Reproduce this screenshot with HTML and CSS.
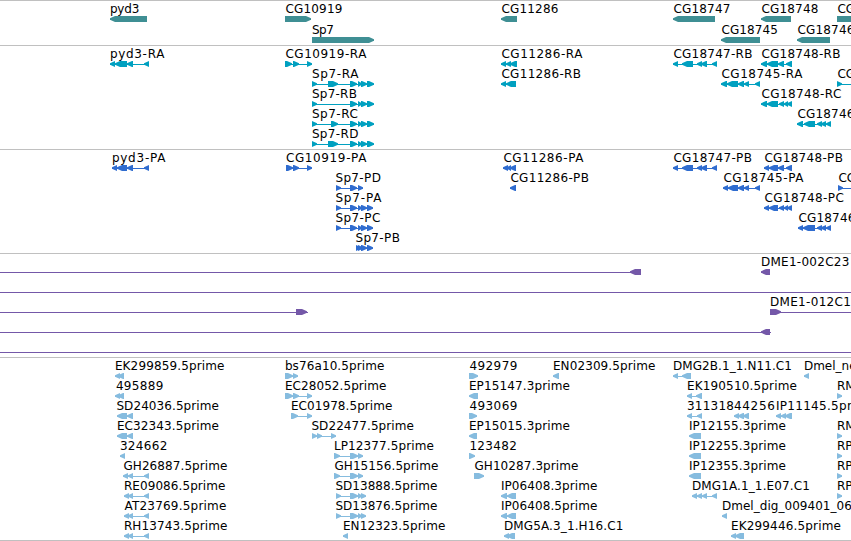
FILE: index.html
```html
<!DOCTYPE html>
<html lang="en">
  <head>
    <meta charset="UTF-8" />
    <title>Genome tracks</title>
    <link rel="stylesheet" href="styles.css">
  </head>
  <body>
    <main>
      <section class="track gene" id="gene"></section>
      <section class="track transcript" id="transcript"></section>
      <section class="track protein" id="protein"></section>
      <section class="track clone" id="clone"></section>
      <section class="track est" id="est"></section>
    </main>

    <script src="tracks.js"></script>
  </body>
</html>
```

FILE: styles.css
```css
html,
body {
  width: 100%;
  margin: 0;
  padding: 0;
  overflow: hidden;
}

body {
  font-family: 'DejaVu Sans', sans-serif;
  font-size: 12px;
  background: #fff;
}

.track {
  border-top: 1px solid #c0c0c0;
  padding-bottom: 3px;
}

.gene {
  color: #3f8f94;
  padding-bottom: 2px;
}

.transcript {
  color: #00a0c0;
}

.protein {
  color: #2f6ccf;
}

.clone {
  color: #7458a8;
}

.est {
  color: #86bcdf;
  padding-bottom: 2px;
  border-bottom: 1px solid #c0c0c0;
}

.row {
  display: block;
  width: 100%;
  height: 20px;
  overflow: visible;
}

.gene .row {
  height: 21px;
}

.row text {
  fill: #000;
}

.row line {
  stroke: currentColor;
  stroke-width: 1px;
  shape-rendering: crispEdges;
}

.row polygon {
  fill: currentColor;
}
```

FILE: tracks.js
```javascript
// feature : [label, label x, label width (0 = natural), strand, exons, line start, line end]
const tracks = {
  gene: [
    [
      ['pyd3', 109.5, 29.5, '-', [[110, 147]]],
      ['CG10919', 285, 57, '+', [[285, 311]]],
      ['CG11286', 501, 57, '-', [[501, 517]]],
      ['CG18747', 673, 57, '-', [[673, 715]]],
      ['CG18748', 761, 57, '-', [[761, 791]]],
      ['CG', 837, 0, '+', [[837, 870]]],
    ],
    [
      ['Sp7', 311.5, 22, '+', [[312, 374]]],
      ['CG18745', 721, 56.5, '-', [[721, 760]]],
      ['CG18746', 797, 57, '-', [[797, 830]]],
    ],
  ],
  transcript: [
    [
      ['pyd3-RA', 109.5, 54.5, '-', [[110, 115], [115, 127], [127, 133], [144, 149]]],
      ['CG10919-RA', 285, 81, '+', [[285, 292], [293, 299], [307, 312]]],
      ['CG11286-RA', 501, 81, '-', [[501, 506], [506, 511], [510, 517]]],
      ['CG18747-RB', 673, 79, '-', [[673, 678], [682, 693], [697, 702], [701, 707], [712, 717]]],
      ['CG18748-RB', 761, 79, '-', [[761, 767], [767, 778], [778, 784], [786, 792]]],
    ],
    [
      ['Sp7-RA', 311.5, 46.5, '+', [[312, 317], [328, 338], [350, 357], [358, 362], [361, 367], [367, 374]]],
      ['CG11286-RB', 501, 79.5, '-', [[501, 506], [506, 516]]],
      ['CG18745-RA', 721, 81, '-', [[721, 727], [727, 738], [738, 744], [744, 749], [755, 760]]],
      ['CG', 837, 0, '+', [[837, 842]], 837, 870],
    ],
    [
      ['Sp7-RB', 311.5, 45, '+', [[312, 317], [350, 357], [358, 362], [361, 367], [367, 374]]],
      ['CG18748-RC', 761, 80, '-', [[761, 767], [767, 778], [779, 784], [784, 788], [787, 792]]],
    ],
    [
      ['Sp7-RC', 311.5, 46, '+', [[312, 317], [331, 338], [350, 357], [358, 362], [361, 367], [367, 374]]],
      ['CG18746', 797, 57, '-', [[797, 803], [804, 815], [817, 822], [821, 826], [826, 831]]],
    ],
    [
      ['Sp7-RD', 311.5, 46.5, '+', [[312, 317], [328, 338], [350, 357], [358, 362], [361, 367], [367, 374]]],
    ],
  ],
  protein: [
    [
      ['pyd3-PA', 111.5, 53.5, '-', [[112, 117], [117, 127], [127, 133], [144, 149]]],
      ['CG10919-PA', 285.5, 80.5, '+', [[286, 293], [293, 299], [307, 312]]],
      ['CG11286-PA', 503, 80, '-', [[503, 508], [507, 511], [510, 516]]],
      ['CG18747-PB', 673, 78.5, '-', [[673, 678], [682, 693], [697, 702], [701, 707], [712, 717]]],
      ['CG18748-PB', 764, 78.5, '-', [[764, 769], [769, 778], [778, 784], [786, 792]]],
    ],
    [
      ['Sp7-PD', 335, 45.5, '+', [[336, 341], [350, 357], [358, 363]]],
      ['CG11286-PB', 510, 78.5, '-', [[510, 516]]],
      ['CG18745-PA', 723, 80, '-', [[723, 728], [728, 738], [738, 744], [744, 749], [755, 760]]],
      ['CG', 838, 0, '+', [[838, 843]], 838, 870],
    ],
    [
      ['Sp7-PA', 335, 46, '+', [[336, 341], [350, 357], [358, 362], [361, 367], [367, 373]]],
      ['CG18748-PC', 764, 79.5, '-', [[764, 769], [769, 778], [779, 784], [784, 788], [787, 792]]],
    ],
    [
      ['Sp7-PC', 335, 45, '+', [[336, 341], [350, 357], [358, 362], [361, 367], [367, 373]]],
      ['CG18746', 798, 57, '-', [[798, 803], [803, 815], [817, 822], [821, 826], [826, 831]]],
    ],
    [
      ['Sp7-PB', 355, 44.5, '+', [[356, 361], [358, 363], [361, 367], [367, 373]]],
    ],
  ],
  clone: [
    [
      ['', 0, 0, '-', [[630, 641]], 0, 641],
      ['DME1-002C23', 760.5, 88.5, '-', [[761, 770]]],
    ],
    [
      ['', 0, 0, '+', [], 0, 860],
    ],
    [
      ['', 0, 0, '+', [[296, 307]], 0, 308],
      ['DME1-012C1', 769.5, 81, '+', [[770, 781]], 770, 860],
    ],
    [
      ['', 0, 0, '-', [[761, 770]], 0, 771],
    ],
    [
      ['', 0, 0, '+', [], 0, 860],
    ],
  ],
  est: [
    [
      ['EK299859.5prime', 114.5, 109.5, '-', [[115, 120], [118, 124]]],
      ['bs76a10.5prime', 284.5, 99.5, '+', [[285, 293], [293, 298]]],
      ['492979', 469, 48, '+', [[469, 478]]],
      ['EN02309.5prime', 552.5, 102.5, '-', [[553, 559]]],
      ['DMG2B.1_1.N11.C1', 672.5, 119, '-', [[673, 678], [682, 691]]],
      ['Dmel_ne', 803.5, 0, '-', [[804, 809]]],
    ],
    [
      ['495889', 115.5, 47.5, '-', [[115, 120], [118, 124]]],
      ['EC28052.5prime', 284.5, 101.5, '+', [[285, 293], [293, 299], [307, 312]]],
      ['EP15147.3prime', 468.5, 101, '-', [[469, 478]]],
      ['EK190510.5prime', 686.5, 110, '-', [[687, 692], [696, 702]]],
      ['RM', 836.5, 0, '+', [[837, 842]]],
    ],
    [
      ['SD24036.5prime', 116, 102.5, '-', [[117, 127], [127, 133]]],
      ['EC01978.5prime', 290.5, 101.5, '+', [[291, 298], [307, 312]]],
      ['493069', 469, 48, '+', [[469, 477]]],
      ['311318', 686.5, 47, '-', [[687, 692], [697, 702]]],
      ['44256', 733.5, 41, '-', [[734, 739], [738, 744], [743, 749]]],
      ['IP11145.5pr', 775.5, 76, '-', [[776, 781], [781, 786], [785, 792]]],
    ],
    [
      ['EC32343.5prime', 116.5, 102, '-', [[117, 127], [127, 133]]],
      ['SD22477.5prime', 311, 102.5, '+', [[312, 317], [317, 322], [331, 336]]],
      ['EP15015.3prime', 468.5, 101, '-', [[469, 477]]],
      ['IP12155.3prime', 688.5, 97, '-', [[689, 701]]],
      ['RM', 836.5, 0, '+', [[837, 842]]],
    ],
    [
      ['324662', 119.5, 47.5, '-', [[120, 125]]],
      ['LP12377.5prime', 333.5, 100, '+', [[334, 340], [350, 358], [358, 363]]],
      ['123482', 469, 47.5, '+', [[469, 475]]],
      ['IP12255.3prime', 688.5, 97, '-', [[689, 701]]],
      ['RP', 836.5, 0, '+', [[837, 842]]],
    ],
    [
      ['GH26887.5prime', 123, 104, '-', [[123, 128], [128, 133], [144, 149]]],
      ['GH15156.5prime', 334, 104, '+', [[334, 340], [350, 358], [358, 363]]],
      ['GH10287.3prime', 474, 104, '+', [[474, 484]]],
      ['IP12355.3prime', 688.5, 97, '-', [[689, 701]]],
      ['RP', 836.5, 0, '+', [[837, 842]]],
    ],
    [
      ['RE09086.5prime', 123.5, 101.5, '-', [[124, 129], [128, 133], [144, 149]]],
      ['SD13888.5prime', 335, 102, '+', [[336, 341], [350, 358], [358, 362], [361, 366]]],
      ['IP06408.3prime', 500.5, 96.5, '-', [[501, 507], [507, 516]]],
      ['DMG1A.1_1.E07.C1', 691.5, 118, '-', [[692, 697], [697, 702], [702, 707], [712, 717]]],
      ['RP', 836.5, 0, '+', [[837, 842]]],
    ],
    [
      ['AT23769.5prime', 124, 102, '-', [[124, 129], [128, 133], [144, 149]]],
      ['SD13876.5prime', 335, 102, '+', [[336, 341], [350, 358], [358, 362], [361, 366]]],
      ['IP06408.5prime', 500.5, 96.5, '-', [[501, 507], [507, 516]]],
      ['Dmel_dig_009401_06', 721.5, 130, '-', [[722, 727]]],
    ],
    [
      ['RH13743.5prime', 123.5, 103.5, '-', [[124, 129], [128, 133], [144, 149]]],
      ['EN12323.5prime', 342.5, 102.5, '-', [[343, 348]]],
      ['DMG5A.3_1.H16.C1', 503.5, 119.5, '-', [[504, 509], [507, 515]]],
      ['EK299446.5prime', 730.5, 110, '-', [[731, 736], [735, 744]]],
    ],
  ],
};

const svgNS = 'http://www.w3.org/2000/svg';

function add(parent, name, attributes) {
  const element = document.createElementNS(svgNS, name);
  for (const key in attributes) {
    element.setAttribute(key, attributes[key]);
  }
  parent.appendChild(element);
  return element;
}

/**
 * Returns the outline of an exon : a box with a blunt pointed end
 */
function arrow(start, end, strand) {
  const head = Math.min(5, end - start);
  if (strand === '+') {
    return `${start},15 ${end - head},15 ${end},17.2 ${end},18.8 ${end - head},21 ${start},21`;
  }
  return `${end},15 ${start + head},15 ${start},17.2 ${start},18.8 ${start + head},21 ${end},21`;
}

function drawFeature(row, [label, x, width, strand, exons, from, to]) {
  const start = from === undefined ? exons[0][0] : from;
  const end = to === undefined ? exons[exons.length - 1][1] : to;
  add(row, 'line', { x1: start, x2: end, y1: 18.5, y2: 18.5 });
  exons.forEach((exon) => add(row, 'polygon', { points: arrow(exon[0], exon[1], strand) }));

  if (label) {
    const text = add(row, 'text', { x: x + 0.4, y: 12 });
    text.textContent = label;
    if (width) {
      text.setAttribute('textLength', width);
    }
  }
}

Object.keys(tracks).forEach((name) => {
  const track = document.getElementById(name);
  tracks[name].forEach((features) => {
    const row = add(track, 'svg', { class: 'row' });
    features.forEach((feature) => drawFeature(row, feature));
  });
});
```
